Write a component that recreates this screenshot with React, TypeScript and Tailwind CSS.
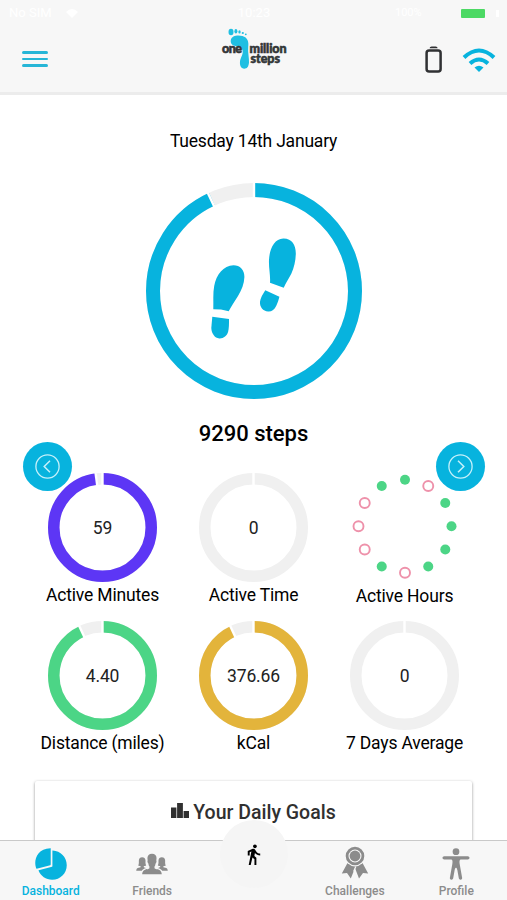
import type { ReactNode } from "react";
import { IoIosBody, IoIosPeople, IoIosPie } from "react-icons/io";
import { MdDirectionsWalk } from "react-icons/md";

const BLUE = "#07b3de";
const GREEN = "#4cd586";

type RingProps = {
  size: number;
  width: number;
  percent: number;
  color: string;
  gap?: number;
  children?: ReactNode;
};

function Ring({ size, width, percent, color, gap = 2.4, children }: RingProps) {
  const r = (size - width) / 2;
  const c = size / 2;
  const length = 2 * Math.PI * r;
  const angle = (percent / 100) * Math.PI * 2;
  const cut = (a: number) => ({
    x1: c + (r - width) * Math.sin(a),
    y1: c - (r - width) * Math.cos(a),
    x2: c + (r + width) * Math.sin(a),
    y2: c - (r + width) * Math.cos(a),
  });

  return (
    <div className="grid place-items-center">
      <svg width={size} height={size} className="col-start-1 row-start-1">
        <circle cx={c} cy={c} r={r} fill="none" stroke="#f0f0f0" strokeWidth={width} />
        <circle
          cx={c}
          cy={c}
          r={r}
          fill="none"
          stroke={color}
          strokeWidth={width}
          strokeDasharray={`${(length * percent) / 100} ${length}`}
          transform={`rotate(-90 ${c} ${c})`}
        />
        <line {...cut(0)} stroke="white" strokeWidth={gap} />
        {percent > 0 && <line {...cut(angle)} stroke="white" strokeWidth={gap} />}
      </svg>
      <div className="col-start-1 row-start-1">{children}</div>
    </div>
  );
}

function Footprints() {
  return (
    <svg width="90" height="106" viewBox="209 238 90 106" fill={BLUE}>
      <path d="M233.5 265.3C240 265.3 244.6 270 244.4 277C244.2 284 241.5 290 238 296C234.5 301.5 231.5 306 228.7 311.3L221 309.5L213.3 309.2C213.6 302 212.8 293 214.2 286C216.2 275 223.5 265.5 233.5 265.3Z" />
      <path d="M212.3 316.7L229 318.9C229 324 229 328 228.2 331.5C227 336 223.5 338.6 219.3 338.4C214.5 338 211.6 333.5 211.3 328Z" />
      <path d="M283.3 238.4C292 238.2 296 245 295.8 254C295.6 261 294 268 291.4 273.5C289 278.5 286 282.5 283.7 287.7L270 282.7C270.6 275 268.6 268 269 260C269.6 248 274.5 238.8 283.3 238.4Z" />
      <path d="M265.3 290.3L279.4 296.7C278.6 300 277.8 302.5 276.4 305.5C274.4 309.7 271.8 311.8 268.2 311.6C263 311.2 259.6 307 260 301.8C260.4 298 262.8 294.3 265.3 290.3Z" />
    </svg>
  );
}

function Logo() {
  return (
    <svg width="68" height="44" viewBox="0 0 68 44">
      <g fill="#20bfe2">
        <path d="M9.8 13C10.5 8.5 17 7.6 21.5 9C26.5 10.5 28 14.5 27.2 20C26.6 25 28.3 31 28 35.5C27.6 40 26 41.7 23.3 41.7C20 41.6 18.6 38.5 19 34.5C19.4 30.5 22.4 27.5 21.6 23.5C20.8 20.5 18 19.6 14.5 19C11 18.4 9.3 16.5 9.8 13Z" />
        <ellipse cx="10" cy="5" rx="2.5" ry="3.3" />
        <ellipse cx="14.9" cy="4.2" rx="1.5" ry="2.3" />
        <ellipse cx="18.5" cy="4.9" rx="1.2" ry="1.6" />
        <circle cx="21.8" cy="6" r="1.1" />
        <circle cx="24.8" cy="7.3" r=".9" />
      </g>
      <g fill="#333638" stroke="#333638" strokeWidth=".6" fontFamily="Lato" fontWeight="900" fontSize="12.5">
        <text x="1" y="26" textLength="20">one</text>
        <text x="28.5" y="26" textLength="37">million</text>
        <text x="29.5" y="36" textLength="29.5">steps</text>
      </g>
    </svg>
  );
}

function Arrow({ flip = false }: { flip?: boolean }) {
  return (
    <svg width="25" height="25" viewBox="0 0 25 25" fill="none" stroke="#c5f0fa" className={flip ? "-scale-x-100" : ""}>
      <circle cx="12.5" cy="12.5" r="11.6" strokeWidth="1.3" />
      <path d="M15 6.8L9.2 12.5L15 18.2" strokeWidth="1.5" />
    </svg>
  );
}

function Rosette() {
  return (
    <svg width="28" height="34" viewBox="0 0 28 34" fill="currentColor" className="-mt-[2px]">
      <path d="M6.5 17L.8 27.5L6 27L9.8 32.5L14 22L18 32.5L22 27L27.2 27.5L21.5 17Z" />
      <circle cx="14" cy="10" r="10.4" fill="#f7f7f7" />
      <circle cx="14" cy="10" r="7.9" fill="none" stroke="currentColor" strokeWidth="2.8" />
      <circle cx="14" cy="10" r="5.4" />
      <path d="M14.8 20.5L12.6 25.5" stroke="#f7f7f7" strokeWidth="1.2" />
    </svg>
  );
}

function ActiveHours() {
  const hours = [true, false, true, true, true, true, false, true, false, false, false, true];
  return (
    <svg width="110" height="110" viewBox="0 0 110 110">
      {hours.map((active, i) => {
        const a = (i * Math.PI) / 6;
        const x = 55 + 46.5 * Math.sin(a);
        const y = 53.3 - 46.5 * Math.cos(a);
        return active ? (
          <circle key={i} cx={x} cy={y} r="5" fill={GREEN} />
        ) : (
          <circle key={i} cx={x} cy={y} r="5" fill="white" stroke="#ee91aa" strokeWidth="1.9" />
        );
      })}
    </svg>
  );
}

function Stat({ label, value, percent, color }: { label: string; value: string; percent: number; color: string }) {
  return (
    <div className="flex h-[148px] flex-col items-center">
      <Ring size={109} width={11.5} percent={percent} color={color}>
        <span className="relative top-px text-[17.5px] tracking-[-0.15px] text-[#222]">{value}</span>
      </Ring>
      <span className="text-[17.5px] leading-[26px] tracking-[-0.17px] whitespace-nowrap">{label}</span>
    </div>
  );
}

function Tab({ icon, label, active = false }: { icon: ReactNode; label: string; active?: boolean }) {
  return (
    <div className={`flex flex-1 flex-col items-center pt-[5px] ${active ? "text-[#07b3de]" : "text-[#8c8c8c]"}`}>
      <div className="flex h-[36px] items-center">{icon}</div>
      <span className="text-[12px] font-medium leading-[18px]">{label}</span>
    </div>
  );
}

export default function App() {
  return (
    <div className="relative flex h-[900px] w-[507px] flex-col overflow-hidden bg-white font-['Roboto',sans-serif] text-black">
      {/* Header */}
      <header className="h-[95px] shrink-0 border-b-[3px] border-[#ececec] bg-[#f7f7f7]">
        <div className="flex h-[26px] items-center justify-between pl-[9px] pr-[8px] text-[13px] text-white">
          <div className="flex w-[160px] items-center gap-[14px]">
            <span>No SIM</span>
            <svg width="12" height="9" viewBox="0 0 12 9" fill="white">
              <path d="M0 3Q6-3 12 3L6 9Z" />
            </svg>
          </div>
          <span>10:23</span>
          <div className="flex w-[160px] items-center justify-end gap-1">
            <span className="w-[62px] text-[11px]">100%</span>
            <span className="h-[9px] w-[24px] rounded-[1px] bg-[#4cd964]" />
            <span className="ml-[7px] h-[7px] w-[3px] bg-white" />
          </div>
        </div>

        <div className="flex h-[66px] items-center justify-between pl-[22px] pr-[11px]">
          <div className="flex w-[160px]">
            <button className="flex flex-col gap-[4px]" aria-label="Menu">
              <span className="h-[2.5px] w-[26px] rounded-full bg-[#27b6d7]" />
              <span className="h-[2.5px] w-[26px] rounded-full bg-[#27b6d7]" />
              <span className="h-[2.5px] w-[26px] rounded-full bg-[#27b6d7]" />
            </button>
          </div>
          <div className="-mt-[20px] mr-[18px]">
            <Logo />
          </div>
          <div className="mt-px flex w-[150px] items-center justify-end gap-[20px]">
            <svg width="18" height="28" viewBox="0 0 18 28">
              <rect x="2.6" y="4.5" width="14" height="21" rx="2.5" fill="none" stroke="#303133" strokeWidth="2.5" />
              <path d="M5.6 2.2Q5.6 .5 7.6 .5H11.6Q13.6 .5 13.6 2.2Z" fill="#303133" />
            </svg>
            <svg width="34" height="26" viewBox="0 0 34 26" fill="none" stroke={BLUE} strokeWidth="4">
              <path d="M2 10.5Q17-3.5 32 10.5" />
              <path d="M8 16.5Q17 8.5 26 16.5" />
              <path d="M12.5 20.5Q17 17 21.5 20.5L17 25Z" fill={BLUE} stroke="none" />
            </svg>
          </div>
        </div>
      </header>

      {/* Daily steps */}
      <main className="flex flex-1 flex-col items-center">
        <p className="mt-[34px] text-[17.5px] leading-[24px] tracking-[-0.2px]">Tuesday 14th January</p>
        <div className="mt-[30px]">
          <Ring size={216} width={14} percent={93} color={BLUE}>
            <Footprints />
          </Ring>
        </div>
        <h1 className="mt-[20px] text-[22px] font-medium leading-[30px]">9290 steps</h1>

        {/* Stats */}
        <section className="relative mt-[24px] h-[296px] w-[507px]">
          <div className="grid grid-cols-[151px_151px_151px] pl-[27px]">
            <Stat label="Active Minutes" value="59" percent={98} color="#5d36f5" />
            <Stat label="Active Time" value="0" percent={0} color="#f0f0f0" />
            <div className="flex h-[148px] flex-col items-center">
              <ActiveHours />
              <span className="text-[17.5px] leading-[26px] tracking-[-0.17px]">Active Hours</span>
            </div>
            <Stat label="Distance (miles)" value="4.40" percent={93} color={GREEN} />
            <Stat label="kCal" value="376.66" percent={93} color="#e3b43b" />
            <Stat label="7 Days Average" value="0" percent={0} color="#f0f0f0" />
          </div>
          <button className="absolute -top-[31px] left-[23px] grid size-[49px] place-items-center rounded-full bg-[#07b3de]" aria-label="Previous day">
            <Arrow />
          </button>
          <button className="absolute -top-[31px] left-[436px] grid size-[49px] place-items-center rounded-full bg-[#07b3de]" aria-label="Next day">
            <Arrow flip />
          </button>
        </section>

        {/* Goals */}
        <section className="mt-[12px] flex h-[80px] w-[437px] justify-center rounded-[2px] bg-white pt-[18px] shadow-[0_1px_3px_rgba(0,0,0,0.45)]">
          <div className="flex h-[28px] items-center gap-[4px] text-[#303030]">
            <svg width="18" height="16" viewBox="0 0 18 16" fill="#303030" className="-mt-[4px]">
              <path d="M0 4.5H5.4V15H0ZM6.1 0H11.9V15H6.1ZM12.6 8H18V15H12.6Z" />
            </svg>
            <h2 className="text-[19.5px] font-medium">Your Daily Goals</h2>
          </div>
        </section>
      </main>

      {/* Bottom tabs */}
      <nav className="absolute inset-x-0 bottom-0 flex h-[60px] border-t border-[#c9c9c9] bg-[#f7f7f7]">
        <Tab active icon={<IoIosPie size={36} />} label="Dashboard" />
        <Tab icon={<IoIosPeople size={36} />} label="Friends" />
        <div className="flex flex-1 justify-center">
          <button className="-mt-[21px] grid size-[68px] place-items-center rounded-full bg-[#f5f5f5]" aria-label="Record a walk">
            <MdDirectionsWalk size={23} />
          </button>
        </div>
        <Tab icon={<Rosette />} label="Challenges" />
        <Tab icon={<IoIosBody size={36} />} label="Profile" />
      </nav>
    </div>
  );
}
